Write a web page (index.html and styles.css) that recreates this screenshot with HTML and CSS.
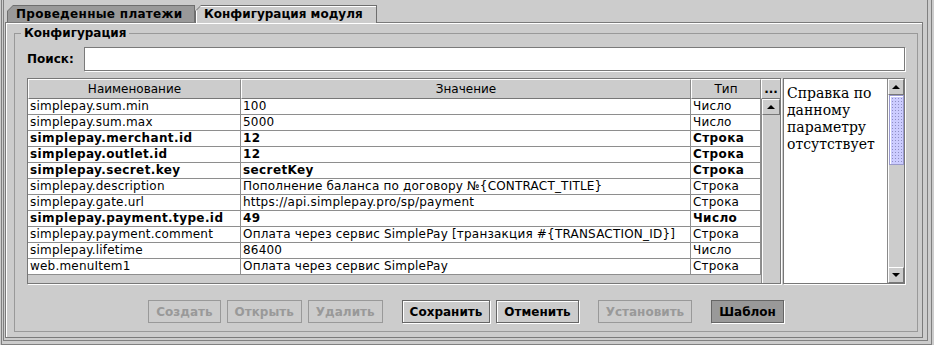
FILE: index.html
```html
<!DOCTYPE html>
<html lang="ru">
<head>
  <meta charset="UTF-8">
  <title>Конфигурация модуля</title>
  <link rel="stylesheet" href="styles.css">
</head>
<body>
  <div class="win">
    <div class="win-in">
      <div class="tabs">
        <div class="tab first"><span>Проведенные платежи</span></div>
        <div class="tab active"><span>Конфигурация модуля</span></div>
      </div>

      <div class="tab-body">
        <fieldset class="group">
          <legend>Конфигурация</legend>
          <div class="group-body">
            <div class="search">
              <label>Поиск:</label>
              <input type="text">
            </div>

            <div class="main">
              <!-- table with parameters -->
              <div class="table-pane">
                <table class="params">
                  <thead>
                    <tr>
                      <th class="c-name">Наименование</th>
                      <th class="c-value">Значение</th>
                      <th class="c-type">Тип</th>
                    </tr>
                  </thead>
                  <tbody>
                    <tr><td>simplepay.sum.min</td><td>100</td><td>Число</td></tr>
                    <tr><td>simplepay.sum.max</td><td>5000</td><td>Число</td></tr>
                    <tr class="set"><td>simplepay.merchant.id</td><td>12</td><td>Строка</td></tr>
                    <tr class="set"><td>simplepay.outlet.id</td><td>12</td><td>Строка</td></tr>
                    <tr class="set"><td>simplepay.secret.key</td><td>secretKey</td><td>Строка</td></tr>
                    <tr><td>simplepay.description</td><td>Пополнение баланса по договору №{CONTRACT_TITLE}</td><td>Строка</td></tr>
                    <tr><td>simplepay.gate.url</td><td>https://api.simplepay.pro/sp/payment</td><td>Строка</td></tr>
                    <tr class="set"><td>simplepay.payment.type.id</td><td>49</td><td>Число</td></tr>
                    <tr><td>simplepay.payment.comment</td><td>Оплата через сервис SimplePay [транзакция #{TRANSACTION_ID}]</td><td>Строка</td></tr>
                    <tr><td>simplepay.lifetime</td><td>86400</td><td>Число</td></tr>
                    <tr><td>web.menuItem1</td><td>Оплата через сервис SimplePay</td><td>Строка</td></tr>
                  </tbody>
                </table>
                <div class="corner">...</div>
                <div class="vbar">
                  <div class="arrow"><i class="up"></i></div>
                  <div class="track"></div>
                </div>
              </div>

              <!-- help for selected parameter -->
              <div class="help-pane">
                <div class="help-text">Справка по данному параметру отсутствует</div>
                <div class="vbar">
                  <div class="arrow"><i class="up"></i></div>
                  <div class="track"><div class="thumb"></div></div>
                  <div class="arrow"><i class="down"></i></div>
                </div>
              </div>
            </div>

            <div class="buttons">
              <div class="btn-group">
                <button disabled>Создать</button>
                <button disabled>Открыть</button>
                <button disabled>Удалить</button>
              </div>
              <div class="btn-group">
                <button>Сохранить</button>
                <button>Отменить</button>
              </div>
              <div class="btn-group">
                <button disabled>Установить</button>
              </div>
              <div class="btn-group">
                <button class="pressed">Шаблон</button>
              </div>
            </div>
          </div>
        </fieldset>
      </div>
    </div>
  </div>
</body>
</html>
```

FILE: styles.css
```css
* {
  box-sizing: border-box;
}
body {
  margin: 0;
  width: 934px;
  height: 345px;
  overflow: hidden;
  background-color: #ccc;
  font-family: "DejaVu Sans", sans-serif;
  font-size: 12px;
  color: #000;
}
.win {
  margin-left: 1px;
  width: 931px;
  height: 345px;
  border: 1px solid #808080;
  border-top: none;
  padding: 0 3px 3px 1px;
}
.win-in {
  height: 100%;
  border: 1px solid #808080;
  border-top: none;
}

/* tabs */
.tabs {
  display: flex;
  align-items: flex-end;
  height: 22px;
  padding-left: 3px;
}
.tab {
  width: 188px;
  height: 17px;
  padding: 1px 1px 0 1px;
  background-color: #6e6e6e;
  clip-path: polygon(0 6px, 6px 0, 100% 0, 100% 100%, 0 100%);
}
.tab span {
  display: block;
  height: 100%;
  padding: 1px 0 0 8px;
  line-height: 15px;
  font-weight: bold;
  white-space: nowrap;
  background-color: #999;
  clip-path: polygon(0 5px, 5px 0, 100% 0, 100% 100%, 0 100%);
}
.tab.first span {
  letter-spacing: 0.3px;
}
.tab.active {
  position: relative;
  z-index: 1;
  width: 182px;
  height: 18px;
  margin-bottom: -1px;
}
.tab.active span {
  background-color: #ccc;
  box-shadow: inset 1px 1px 0 #fff;
}
.tab-body {
  height: 316px;
  margin: 0 4px 0 1px;
  padding: 3px 4px 5px 8px;
  border: 1px solid #7a7a7a;
  box-shadow: inset 1px 1px 0 #fff;
}

/* group box */
.group {
  margin: 0;
  padding: 0;
  min-width: 0;
  border: 1px solid #999;
}
.group legend {
  margin-left: 6px;
  padding: 0 3px;
  line-height: 15px;
  font-weight: bold;
}
.group-body {
  padding: 6px 12px 8px 12px;
}
.search {
  display: flex;
  align-items: center;
  height: 24px;
}
.search label {
  width: 57px;
  font-weight: bold;
}
.search input {
  flex: 1;
  height: 24px;
  margin: 0;
  border: 1px solid #7a7a7a;
  box-shadow: 1px 1px 0 #fff;
  background-color: #fff;
}

.main {
  display: flex;
  gap: 2px;
  height: 206px;
  margin-top: 7px;
}
.table-pane {
  display: grid;
  grid-template-columns: 733px 19px;
  grid-template-rows: 20px 1fr;
  width: 754px;
  border: 1px solid #777;
  box-shadow: 1px 1px 0 #fff;
}
.params {
  grid-row: 1 / 3;
  grid-column: 1;
  align-self: start;
  width: 733px;
  table-layout: fixed;
  border-collapse: separate;
  border-spacing: 0;
}
.params th {
  height: 20px;
  padding: 0;
  font-weight: normal;
  text-align: center;
  border-top: 1px solid #fff;
  border-left: 1px solid #fff;
  border-right: 1px solid #8a8a8a;
  border-bottom: 1px solid #777;
}
.c-name { width: 213px; }
.c-value { width: 450px; }
.c-type { width: 70px; }
.params td {
  height: 16px;
  padding: 0 2px;
  line-height: 15px;
  letter-spacing: 0.2px;
  white-space: nowrap;
  overflow: hidden;
  background-color: #fff;
  border-right: 1px solid #8e8e8e;
  border-bottom: 1px solid #8e8e8e;
}
.params tr.set td {
  font-weight: bold;
  letter-spacing: 0.4px;
}
.corner {
  grid-row: 1;
  grid-column: 2;
  text-align: center;
  line-height: 18px;
  font-weight: bold;
  border-top: 1px solid #fff;
  border-left: 1px solid #fff;
  border-bottom: 1px solid #777;
}

/* scrollbars */
.vbar {
  display: flex;
  flex-direction: column;
  border-left: 1px solid #8a8a8a;
}
.table-pane .vbar {
  grid-row: 2;
  grid-column: 2;
}
.arrow {
  display: flex;
  align-items: center;
  justify-content: center;
  height: 16px;
  border: 1px solid;
  border-color: #fff #777 #777 #fff;
}
.arrow i {
  width: 0;
  height: 0;
  border-left: 4px solid transparent;
  border-right: 4px solid transparent;
}
.arrow i.up {
  border-bottom: 4px solid #000;
}
.arrow i.down {
  border-top: 4px solid #000;
}
.track {
  flex: 1;
  display: flex;
  flex-direction: column;
  border-left: 1px solid #fff;
}
.thumb {
  height: 70px;
  border: 1px solid #9999cc;
  box-shadow: inset 1px 1px 0 #fff;
  background-color: #ccccff;
  background-image: radial-gradient(#8f8fc4 0.7px, transparent 0.9px);
  background-size: 3px 3px;
  background-position: 1px 1px;
}

.help-pane {
  display: flex;
  width: 122px;
  border: 1px solid #777;
  box-shadow: 1px 1px 0 #fff;
}
.help-text {
  flex: 1;
  padding: 6px 3px 0 3px;
  background-color: #fff;
  font-family: "DejaVu Serif", serif;
  font-size: 14px;
  line-height: 17px;
}
.help-pane .vbar {
  width: 17px;
}

/* buttons */
.buttons {
  display: flex;
  justify-content: center;
  gap: 19px;
  margin-top: 16px;
}
.btn-group {
  display: flex;
  gap: 6px;
}
button {
  height: 23px;
  padding: 0 7px;
  font-family: "DejaVu Sans", sans-serif;
  font-size: 12px;
  font-weight: bold;
  color: #000;
  background-color: #ccc;
  border: 1px solid #666;
  box-shadow: inset 1px 1px 0 #fff, 1px 1px 0 #fff;
}
button:disabled {
  color: #999;
  border-color: #999;
  box-shadow: none;
}
button.pressed {
  background-color: #999;
  box-shadow: 1px 1px 0 #fff;
}
```
